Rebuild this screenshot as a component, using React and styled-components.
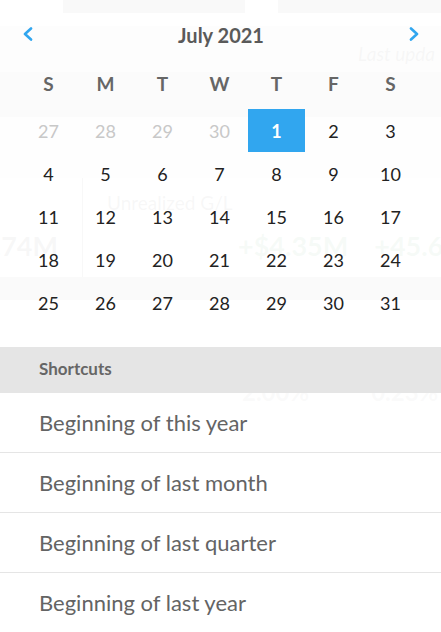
import React from "react";
import styled, { createGlobalStyle } from "styled-components";

const Global = createGlobalStyle`
  html, body { margin: 0; padding: 0; background: #fff; }
  body { font-family: Lato, "Open Sans", sans-serif; }
`;

const Screen = styled.div`
  position: relative;
  width: 441px;
  height: 632px;
  overflow: hidden;
  background: #fff;
`;

/* the dashboard that sits under the popover */
const Backdrop = styled.div`
  display: flex;
  flex-direction: column;
  height: 100%;
`;

const TopStrip = styled.div`
  display: flex;
  height: 13px;
  gap: 33px;
  padding-left: 63px;
  flex: none;
`;

const StripBox = styled.div`
  width: ${(p) => p.$w || "auto"};
  flex: ${(p) => (p.$w ? "none" : "1")};
  background: #8c8c8c;
`;

const Band = styled.div`
  height: ${(p) => p.$h}px;
  background: ${(p) => p.$bg};
  display: flex;
  align-items: center;
  justify-content: flex-end;
  overflow: hidden;
  flex: none;
`;

const Updated = styled.span`
  font-style: italic;
  font-size: 19px;
  color: #555;
  white-space: nowrap;
  width: 83px;
  margin-top: 8px;
`;

const StatsRow = styled.div`
  display: flex;
  height: 99px;
  flex: none;
`;

const StatLeft = styled.div`
  width: 82px;
  flex: none;
  display: flex;
  justify-content: flex-end;
  padding-top: 51px;
  box-sizing: border-box;
  overflow: hidden;
`;

const StatRight = styled.div`
  flex: 1;
  border-left: 1px solid #777;
  padding: 13px 0 0 24px;
  display: flex;
  flex-direction: column;
  overflow: hidden;
`;

const StatLabel = styled.div`
  font-size: 19px;
  color: #666;
  height: 38px;
  white-space: nowrap;
`;

const StatValues = styled.div`
  display: flex;
  white-space: nowrap;
`;

const BigValue = styled.span`
  font-size: 27px;
  font-weight: 700;
  color: ${(p) => p.$c || "#666"};
  margin-left: ${(p) => p.$ml || 0}px;
  margin-right: ${(p) => p.$mr || 0}px;
  flex: none;
`;

const PctRow = styled.div`
  display: flex;
  padding: 77px 0 0 242px;
  gap: 62px;
  white-space: nowrap;
`;

const Pct = styled.span`
  font-size: 24px;
  font-weight: 700;
  color: #999;
`;

/* popover */
const Popover = styled.div`
  position: absolute;
  inset: 0;
  background: rgba(255, 255, 255, 0.95);
  display: flex;
  flex-direction: column;
`;

const Header = styled.div`
  height: 68px;
  display: flex;
  align-items: center;
  justify-content: space-between;
  padding: 0 21px 0 22px;
  flex: none;
`;

const Title = styled.div`
  font-size: 20px;
  font-weight: 700;
  color: #5a5a5a;
  padding-top: 2px;
`;

const NavButton = styled.button`
  border: 0;
  background: none;
  padding: 0;
  width: 12px;
  height: 14px;
  display: flex;
  align-items: center;
  justify-content: center;
  cursor: pointer;
`;

const Grid = styled.div`
  display: grid;
  grid-template-columns: repeat(7, 57px);
  grid-auto-rows: ${(p) => p.$row}px;
  padding: 0 20px;
  margin-bottom: ${(p) => p.$mb || 0}px;
  flex: none;
`;

const WeekDay = styled.div`
  display: flex;
  align-items: center;
  justify-content: center;
  font-size: 19px;
  font-weight: 700;
  color: #666;
`;

const Day = styled.div`
  display: flex;
  align-items: center;
  justify-content: center;
  font-size: 18px;
  color: ${(p) => (p.$selected ? "#fff" : p.$muted ? "#c8c8c8" : "#222")};
  background: ${(p) => (p.$selected ? "#31a6ef" : "transparent")};
  font-weight: ${(p) => (p.$selected ? 700 : 400)};
`;

const ShortcutHead = styled.div`
  margin-top: 23px;
  height: 46px;
  background: #e5e5e5;
  display: flex;
  align-items: center;
  padding: 0 0 3px 39px;
  box-sizing: border-box;
  font-size: 17px;
  font-weight: 700;
  color: #666;
  flex: none;
`;

const ShortcutItem = styled.div`
  height: 59px;
  display: flex;
  align-items: center;
  padding-left: 39px;
  font-size: 22px;
  color: #646464;
  border-bottom: 1px solid #e5e5e5;
  flex: none;
  &:last-child { border-bottom: 0; }
`;

const Chevron = ({ dir }) => (
  <svg width="12" height="14" viewBox="0 0 12 14">
    <path
      d={dir === "left" ? "M9 1.5 L3 7 L9 12.5" : "M3 1.5 L9 7 L3 12.5"}
      fill="none"
      stroke="#31a6ef"
      strokeWidth="2.6"
      strokeLinecap="round"
      strokeLinejoin="round"
    />
  </svg>
);

const weekdays = ["S", "M", "T", "W", "T", "F", "S"];
const days = [
  ...[27, 28, 29, 30].map((d) => ({ d, muted: true })),
  ...Array.from({ length: 31 }, (_, i) => ({ d: i + 1 })),
];
const shortcuts = [
  "Beginning of this year",
  "Beginning of last month",
  "Beginning of last quarter",
  "Beginning of last year",
];

export default function App() {
  return (
    <Screen>
      <Global />
      <Backdrop aria-hidden="true">
        <TopStrip>
          <StripBox $w="182px" />
          <StripBox />
        </TopStrip>
        <Band $h={13} $bg="#fff" />
        <Band $h={46} $bg="#d8d8d8">
          <Updated>Last upda</Updated>
        </Band>
        <Band $h={45} $bg="#b0b0b0" />
        <Band $h={61} $bg="#e6e6e6" />
        <StatsRow>
          <StatLeft>
            <BigValue $mr={24}>$1.74M</BigValue>
          </StatLeft>
          <StatRight>
            <StatLabel>Unrealized G/L</StatLabel>
            <StatValues>
              <BigValue $c="#4fa060" $ml={131}>+$4.35M</BigValue>
              <BigValue $c="#4fa060" $ml={26}>+45.60%</BigValue>
            </StatValues>
          </StatRight>
        </StatsRow>
        <Band $h={23} $bg="#a0a0a0" />
        <PctRow>
          <Pct>2.00%</Pct>
          <Pct>0.23%</Pct>
        </PctRow>
      </Backdrop>

      <Popover>
        <Header>
          <NavButton aria-label="Previous month">
            <Chevron dir="left" />
          </NavButton>
          <Title>July 2021</Title>
          <NavButton aria-label="Next month">
            <Chevron dir="right" />
          </NavButton>
        </Header>
        <Grid $row={30} $mb={11}>
          {weekdays.map((w, i) => (
            <WeekDay key={i}>{w}</WeekDay>
          ))}
        </Grid>
        <Grid $row={43}>
          {days.map(({ d, muted }, i) => (
            <Day key={i} $muted={muted} $selected={!muted && d === 1}>
              {d}
            </Day>
          ))}
        </Grid>
        <ShortcutHead>Shortcuts</ShortcutHead>
        {shortcuts.map((s) => (
          <ShortcutItem key={s}>{s}</ShortcutItem>
        ))}
      </Popover>
    </Screen>
  );
}
